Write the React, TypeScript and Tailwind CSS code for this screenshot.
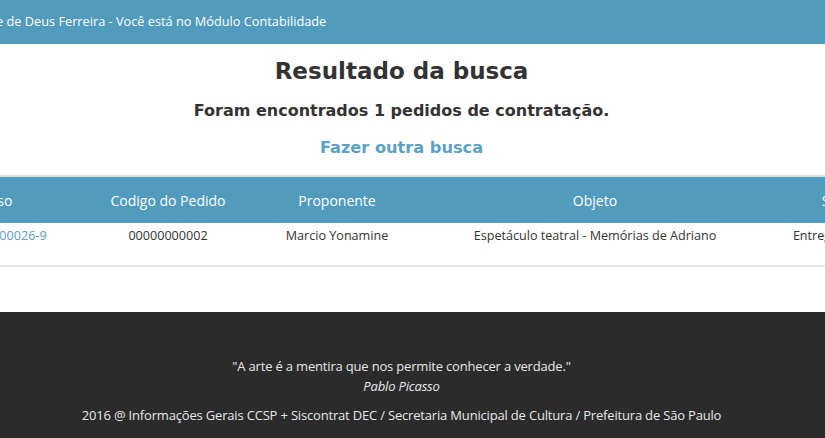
import React from 'react';

const cols = [
  { head: 'Processo', value: '6025.2016/0000026-9', w: 'w-[166px]', link: true },
  { head: 'Codigo do Pedido', value: '00000000002', w: 'w-[204px]' },
  { head: 'Proponente', value: 'Marcio Yonamine', w: 'w-[134px]' },
  { head: 'Objeto', value: 'Espetáculo teatral - Memórias de Adriano', w: 'w-[382px]' },
  { head: 'Status', value: 'Entregue ao DEC', w: 'w-[112px]' },
];

const App: React.FC = () => {
  return (
    <div className="w-full h-[438px] overflow-hidden bg-white" style={{ fontFamily: '"Open Sans", sans-serif' }}>
      <div className="w-[1003px] -ml-[100px] flex flex-col h-full">
        {/* barra superior */}
        <div className="h-[44px] bg-[#519bbd] flex items-center pl-[46px] text-white text-[12.75px]">
          Olá, Jorge de Deus Ferreira - Você está no Módulo Contabilidade
        </div>

        <div className="flex flex-col items-center text-[#333]" style={{ fontFamily: '"DejaVu Sans", sans-serif' }}>
          <h1 className="mt-[13px] text-[23px] font-bold leading-[28px]">Resultado da busca</h1>
          <h3 className="mt-[15px] text-[16px] font-bold leading-[22px]">Foram encontrados 1 pedidos de contratação.</h3>
          <a href="#" className="mt-[15px] text-[16.2px] font-bold leading-[22px] text-[#5aa1c5]">Fazer outra busca</a>
        </div>

        {/* tabela de resultados */}
        <div className="mt-[16px] border-t-2 border-[#dddddd]">
          <div className="flex h-[46px] bg-[#519bbd] text-white text-[14px] items-center">
            {cols.map((c) => (
              <div key={c.head} className={`${c.w} shrink-0 text-center`}>{c.head}</div>
            ))}
          </div>
          <div className="flex h-[44px] pt-[4px] text-[12.6px] text-[#333] border-b-2 border-[#e6e6e1]">
            {cols.map((c) => (
              <div key={c.head} className={`${c.w} shrink-0 text-center whitespace-nowrap ${c.link ? 'text-[#5b9cc2]' : ''}`}>
                {c.value}
              </div>
            ))}
          </div>
        </div>

        <div className="flex-1 mt-[45px] bg-[#2b2b2b] flex flex-col items-center text-[#e8e8e8] text-[13px] tracking-[-0.18px] pt-[45px]">
          <p className="leading-[19px]">"A arte é a mentira que nos permite conhecer a verdade."</p>
          <p className="leading-[19px] italic mt-[1px]">Pablo Picasso</p>
          <p className="mt-[10px] leading-[19px]">2016 @ Informações Gerais CCSP + Siscontrat DEC / Secretaria Municipal de Cultura / Prefeitura de São Paulo</p>
        </div>
      </div>
    </div>
  );
};

export default App;
